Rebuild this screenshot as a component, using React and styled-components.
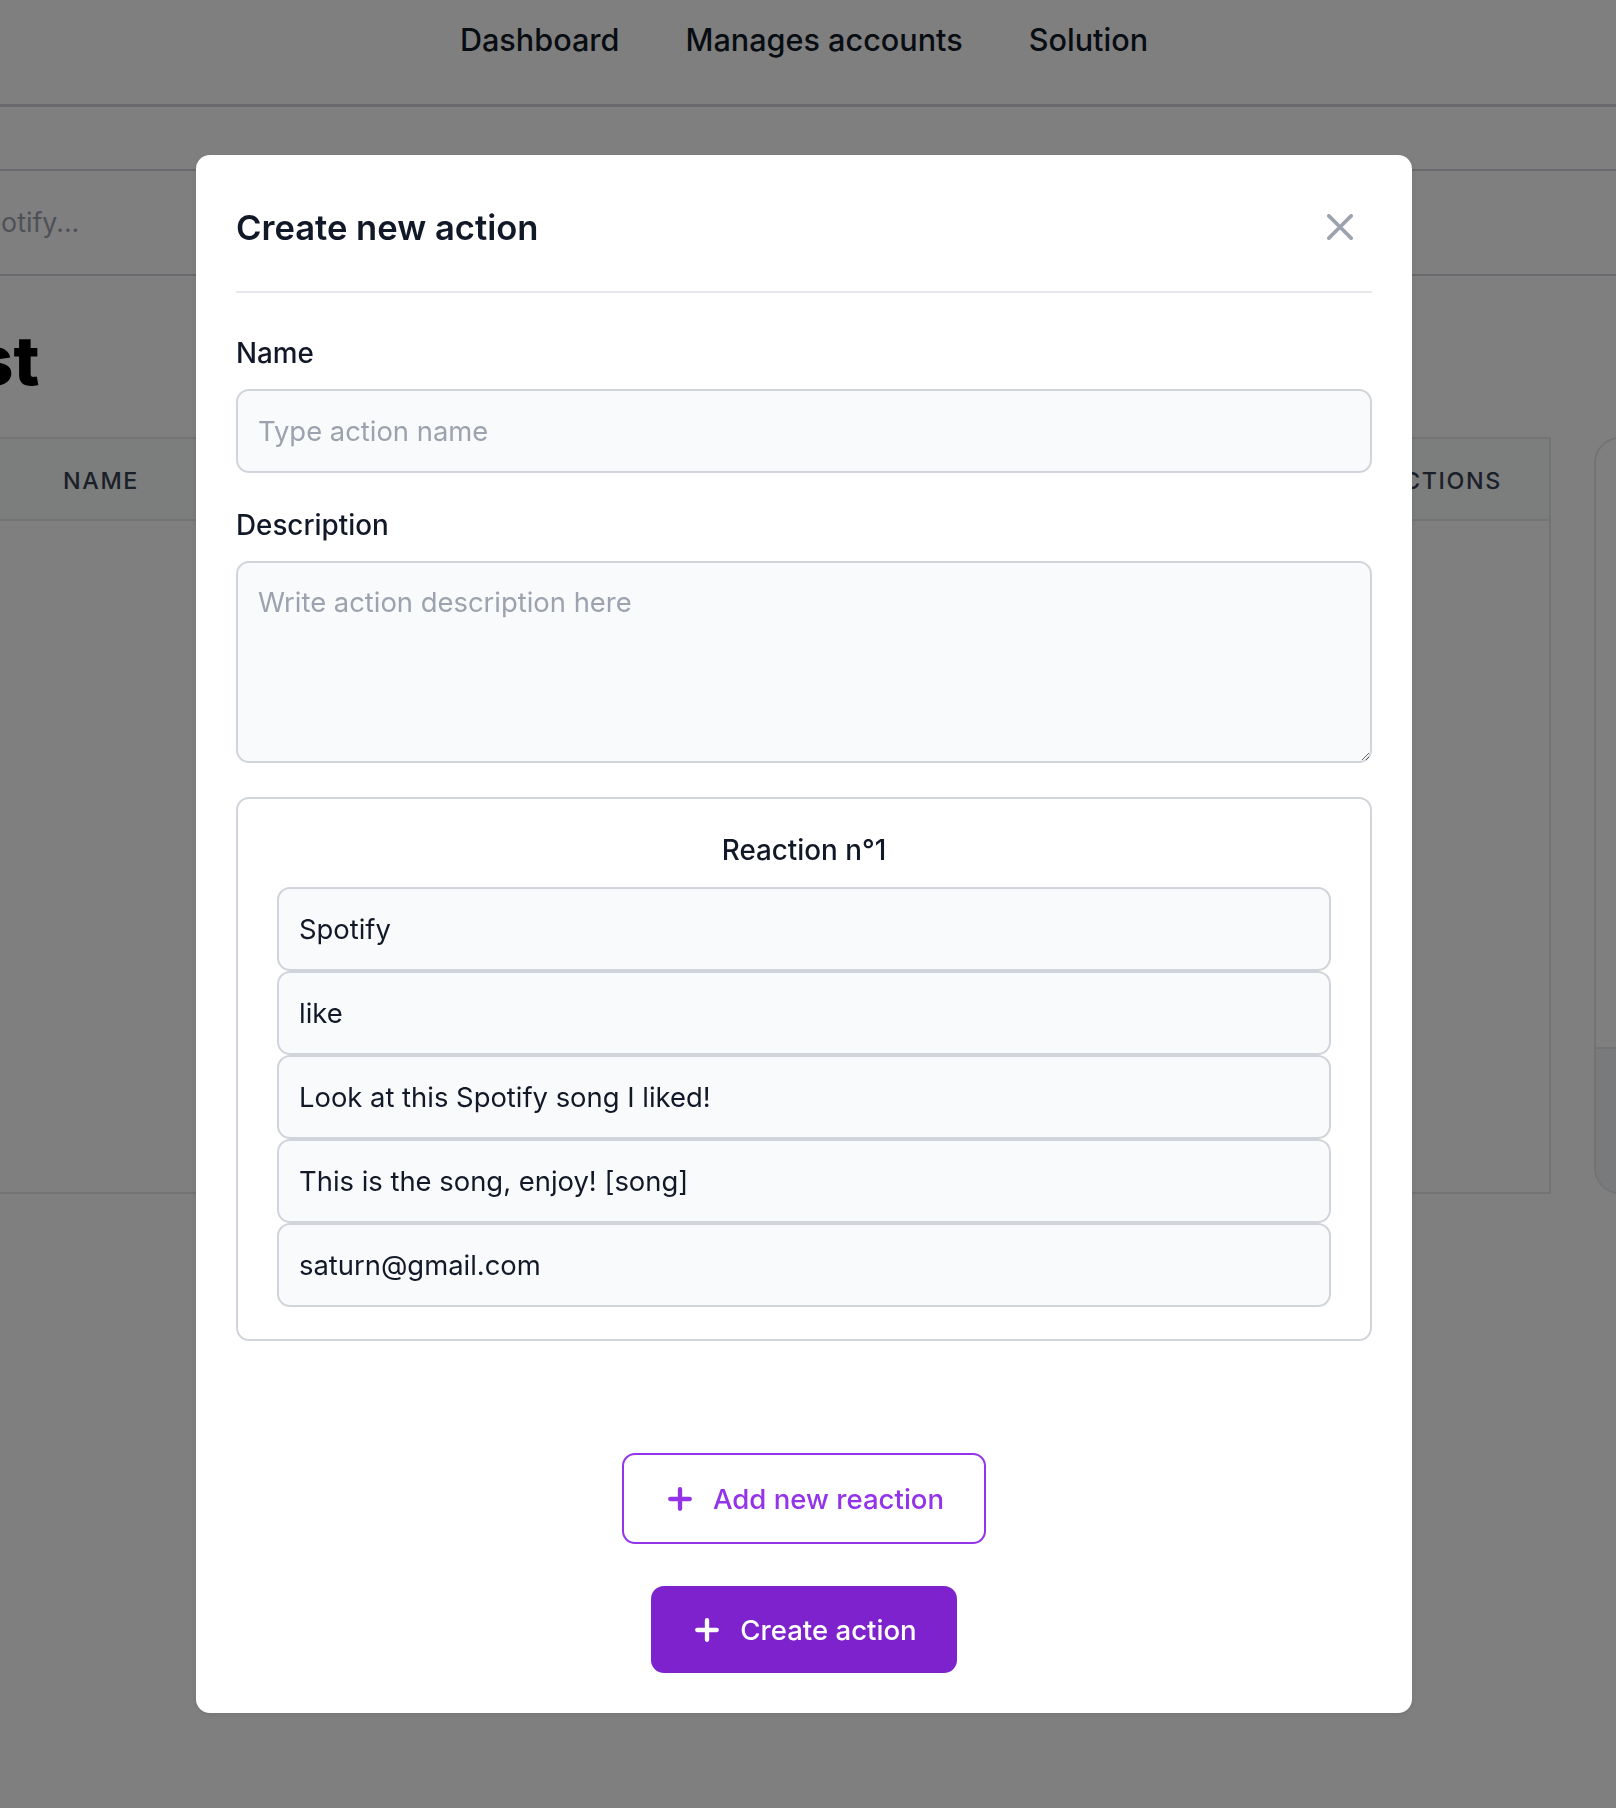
import React from "react";
import styled, { createGlobalStyle } from "styled-components";

const GlobalStyle = createGlobalStyle`
  html, body {
    margin: 0;
    padding: 0;
    background: #ffffff;
    overflow: hidden;
    font-family: Inter, "Noto Sans", "Liberation Sans", sans-serif;
  }
  * { box-sizing: border-box; }
`;

/* ---------- background page ---------- */
const Page = styled.div`
  height: 1808px;
  background: #ffffff;
  overflow: hidden;
`;

const Nav = styled.nav`
  display: flex;
  justify-content: center;
  gap: 66px;
  height: 107px;
  padding: 20px 8px 0 0;
  border-bottom: 3px solid #d1d5db;
`;

const NavLink = styled.a`
  font-size: 30.6px;
  font-weight: 500;
  line-height: 40px;
  color: #111827;
  text-decoration: none;
`;

const Content = styled.div`
  margin-left: -300px;
`;

const SearchBand = styled.div`
  margin-top: 62px;
  border-top: 2px solid #d1d5db;
  border-bottom: 2px solid #d1d5db;
  padding: 31px 0 32px 171px;
  font-size: 26.8px;
  line-height: 40px;
  color: #9ca3af;
`;

const Heading = styled.h1`
  margin: 50px 0 0;
  padding-left: 0;
  font-size: 68px;
  font-weight: 800;
  line-height: 68px;
  color: #000000;
`;

const Grid = styled.div`
  display: flex;
  gap: 43px;
  margin-top: 43px;
`;

const Table = styled.div`
  flex-shrink: 0;
  width: 1851px;
  border: 2px solid #e5e7eb;
`;

const TableHead = styled.div`
  display: flex;
  align-items: center;
  height: 82px;
  padding-top: 3px;
  background: #f9fafb;
  border-bottom: 2px solid #e5e7eb;
`;

const HeadCell = styled.div`
  flex: ${(p) => (p.$grow ? 1 : "none")};
  width: ${(p) => (p.$w ? `${p.$w}px` : "auto")};
  padding: ${(p) => p.$pad || "0"};
  text-align: ${(p) => p.$align || "left"};
  font-size: 23.3px;
  font-weight: 500;
  letter-spacing: 0.07em;
  text-transform: uppercase;
  color: #374151;
`;

const TableBody = styled.div`
  height: 671px;
  background: #ffffff;
`;

const SideCard = styled.div`
  flex-shrink: 0;
  width: 420px;
  display: flex;
  flex-direction: column;
  border: 2px solid #e5e7eb;
  border-radius: 26px;
  overflow: hidden;
`;

const SideCardBody = styled.div`
  flex: 1;
`;

const SideCardFooter = styled.div`
  height: 145px;
  background: #f3f4f6;
  border-top: 2px solid #e5e7eb;
`;

/* ---------- modal ---------- */
const Overlay = styled.div`
  position: fixed;
  inset: 0;
  background: rgba(0, 0, 0, 0.5);
  display: flex;
  justify-content: center;
  align-items: flex-start;
  padding: 155px 8px 0 0;
`;

const Modal = styled.div`
  width: 1216px;
  background: #ffffff;
  border-radius: 14px;
  padding: 0 40px 40px;
  box-shadow: 0 2px 6px rgba(0, 0, 0, 0.08);
`;

const ModalHeader = styled.div`
  display: flex;
  align-items: center;
  justify-content: space-between;
  padding: 50px 0 42px;
  border-bottom: 2px solid #e5e7eb;
`;

const Title = styled.h3`
  margin: 0;
  font-size: 34.6px;
  font-weight: 600;
  line-height: 44px;
  color: #111827;
`;

const CloseButton = styled.button`
  display: inline-flex;
  align-items: center;
  justify-content: center;
  width: 52px;
  height: 44px;
  margin-right: 6px;
  padding: 0;
  border: none;
  background: transparent;
  color: #9ca3af;
  cursor: pointer;
`;

const Form = styled.form`
  padding-top: 40px;
`;

const Field = styled.div`
  & + & {
    margin-top: 32px;
  }
`;

const Label = styled.label`
  display: block;
  margin-bottom: 16px;
  font-size: 27.8px;
  font-weight: 500;
  line-height: 40px;
  color: #111827;
`;

const fieldBase = `
  display: block;
  width: 100%;
  background: #f9fafb;
  border: 2px solid #d1d5db;
  border-radius: 13px;
  font-family: Inter, "Noto Sans", "Liberation Sans", sans-serif;
  font-size: 27.4px;
  line-height: 40px;
  color: #111827;
  outline: none;
  &::placeholder { color: #9ca3af; opacity: 1; }
`;

const TextInput = styled.input`
  ${fieldBase}
  height: 84px;
  padding: 0 20px;
`;

const TextArea = styled.textarea`
  ${fieldBase}
  height: 202px;
  padding: 19px 20px;
`;

const ReactionBox = styled.div`
  margin-top: 34px;
  border: 2px solid #d1d5db;
  border-radius: 13px;
  padding: 31px 39px 32px;
`;

const ReactionTitle = styled.h4`
  margin: 0 0 17px;
  text-align: center;
  font-size: 27.8px;
  font-weight: 500;
  line-height: 40px;
  color: #111827;
`;

const RowList = styled.div`
  display: flex;
  flex-direction: column;
`;

const Actions = styled.div`
  display: flex;
  flex-direction: column;
  align-items: center;
  gap: 42px;
  margin-top: 112px;
`;

const Button = styled.button`
  display: inline-flex;
  align-items: center;
  gap: 20px;
  height: ${(p) => (p.$outline ? 91 : 87)}px;
  padding: 0 40px 0 43px;
  border-radius: 13px;
  border: ${(p) => (p.$outline ? "2px solid #9333ea" : "none")};
  background: ${(p) => (p.$outline ? "#ffffff" : "#7e22ce")};
  color: ${(p) => (p.$outline ? "#9333ea" : "#ffffff")};
  font-family: Inter, "Noto Sans", "Liberation Sans", sans-serif;
  font-size: 27.6px;
  font-weight: 500;
  line-height: 40px;
  cursor: pointer;
`;

const PlusIcon = () => (
  <svg width="26" height="26" viewBox="0 0 24 24" fill="none" aria-hidden="true">
    <path d="M12 3v18M3 12h18" stroke="currentColor" strokeWidth="4" strokeLinecap="round" />
  </svg>
);

const CloseIcon = () => (
  <svg width="26" height="26" viewBox="0 0 14 14" fill="none" aria-hidden="true">
    <path
      d="m1 1 6 6m0 0 6 6M7 7l6-6M7 7l-6 6"
      stroke="currentColor"
      strokeWidth="2"
      strokeLinecap="round"
      strokeLinejoin="round"
    />
  </svg>
);

const reactionValues = [
  "Spotify",
  "like",
  "Look at this Spotify song I liked!",
  "This is the song, enjoy! [song]",
  "saturn@gmail.com",
];

export default function App() {
  return (
    <>
      <GlobalStyle />
      <Page>
        <Nav>
          <NavLink>Dashboard</NavLink>
          <NavLink>Manages accounts</NavLink>
          <NavLink>Solution</NavLink>
        </Nav>
        <Content>
          <SearchBand>Search Spotify...</SearchBand>
          <Heading>Action list</Heading>
          <Grid>
            <Table>
              <TableHead>
                <HeadCell $w={361} $pad="0 0 0 40px">ID</HeadCell>
                <HeadCell $grow>Name</HeadCell>
                <HeadCell $grow>Description</HeadCell>
                <HeadCell $pad="0 47px 0 0" $align="right">Actions</HeadCell>
              </TableHead>
              <TableBody />
            </Table>
            <SideCard>
              <SideCardBody />
              <SideCardFooter />
            </SideCard>
          </Grid>
        </Content>
      </Page>

      <Overlay>
        <Modal>
          <ModalHeader>
            <Title>Create new action</Title>
            <CloseButton type="button" aria-label="Close">
              <CloseIcon />
            </CloseButton>
          </ModalHeader>
          <Form onSubmit={(e) => e.preventDefault()}>
            <Field>
              <Label htmlFor="name">Name</Label>
              <TextInput id="name" placeholder="Type action name" />
            </Field>
            <Field>
              <Label htmlFor="desc">Description</Label>
              <TextArea id="desc" placeholder="Write action description here" />
            </Field>
            <ReactionBox>
              <ReactionTitle>Reaction n°1</ReactionTitle>
              <RowList>
                {reactionValues.map((v) => (
                  <TextInput key={v} defaultValue={v} readOnly />
                ))}
              </RowList>
            </ReactionBox>
            <Actions>
              <Button type="button" $outline>
                <PlusIcon />
                Add new reaction
              </Button>
              <Button type="submit">
                <PlusIcon />
                Create action
              </Button>
            </Actions>
          </Form>
        </Modal>
      </Overlay>
    </>
  );
}
